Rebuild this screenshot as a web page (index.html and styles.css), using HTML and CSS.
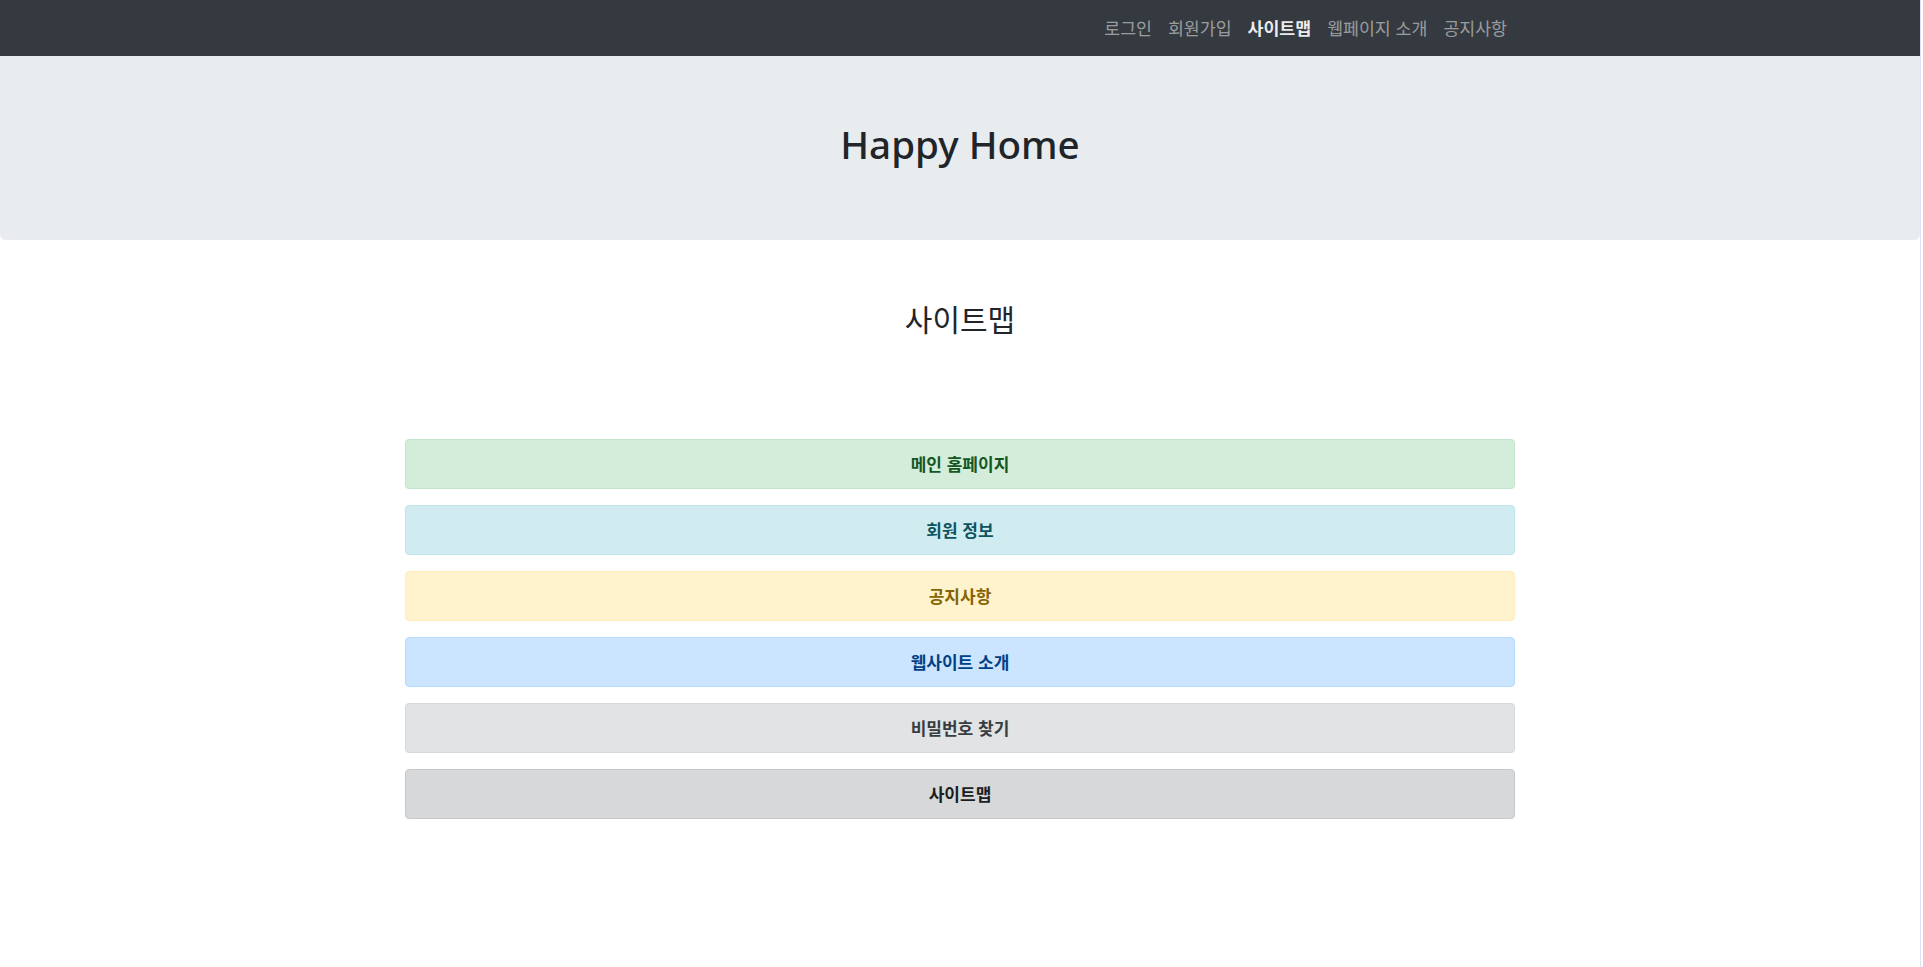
FILE: index.html
```html
<!DOCTYPE html>
<html lang="ko">
<head>
<meta charset="utf-8">
<title>사이트맵</title>
<link rel="stylesheet" href="styles.css">
</head>
<body>
<nav class="navbar">
  <div class="container nav-inner">
    <ul class="nav-list">
      <li><a class="nav-link" href="#">로그인</a></li>
      <li><a class="nav-link" href="#">회원가입</a></li>
      <li><a class="nav-link active" href="#">사이트맵</a></li>
      <li><a class="nav-link" href="#">웹페이지 소개</a></li>
      <li><a class="nav-link" href="#">공지사항</a></li>
    </ul>
  </div>
</nav>
<header class="jumbotron">
  <h1 class="title">Happy Home</h1>
</header>
<main class="container">
  <h3 class="page-title">사이트맵</h3>
  <div class="alerts">
    <div class="alert alert-success"><a href="#">메인 홈페이지</a></div>
    <div class="alert alert-info"><a href="#">회원 정보</a></div>
    <div class="alert alert-warning"><a href="#">공지사항</a></div>
    <div class="alert alert-primary"><a href="#">웹사이트 소개</a></div>
    <div class="alert alert-secondary"><a href="#">비밀번호 찾기</a></div>
    <div class="alert alert-dark"><a href="#">사이트맵</a></div>
  </div>
</main>
</body>
</html>
```

FILE: styles.css
```css
html {
  background: #ffffff;
}
body {
  margin: 0;
  width: 1920px;
  min-height: 967px;
  box-shadow: 1px 0 0 #dfe2f2;
  font-family: "Segoe UI", "Noto Sans", "Noto Sans CJK KR", sans-serif;
  font-size: 16px;
  line-height: 1.5;
  color: #212529;
  background: #ffffff;
}
.container {
  width: 1140px;
  padding: 0 15px;
  margin: 0 auto;
  box-sizing: border-box;
}
.navbar {
  background: #343a40;
  height: 56px;
  display: flex;
  align-items: center;
}
.nav-inner {
  display: flex;
  justify-content: flex-end;
}
.nav-list {
  list-style: none;
  margin: 0;
  padding: 0;
  display: flex;
}
.nav-link {
  display: block;
  padding: 8px 8px;
  color: rgba(255, 255, 255, 0.5);
  text-decoration: none;
  font-family: "Noto Sans CJK KR", sans-serif;
  font-size: 17.3px;
  line-height: 24px;
}
.nav-link.active {
  color: rgba(255, 255, 255, 0.92);
  font-weight: 700;
}
.jumbotron {
  background: #e9ecef;
  padding: 64px 32px;
  margin-bottom: 32px;
  border-radius: 0 0 5px 5px;
  text-align: center;
}
.title {
  margin: 0 0 8px;
  font-family: "Noto Sans", "Noto Sans CJK KR", sans-serif;
  font-size: 38.6px;
  font-weight: 500;
  line-height: 48px;
  color: #212529;
}
.page-title {
  margin: 60px 0 0;
  text-align: center;
  font-family: "Noto Sans CJK KR", sans-serif;
  font-size: 30px;
  font-weight: 400;
  line-height: 36px;
  color: #212529;
}
.alerts {
  margin-top: 103px;
  display: flex;
  flex-direction: column;
  gap: 16px;
}
.alert {
  padding: 12px 20px;
  border: 1px solid transparent;
  border-radius: 4px;
  text-align: center;
  font-family: "Noto Sans CJK KR", sans-serif;
  font-size: 17px;
  line-height: 24px;
}
.alert a {
  font-weight: 700;
  text-decoration: none;
  color: inherit;
}
.alert-success { background: #d4edda; border-color: #c3e6cb; color: #155724; }
.alert-info { background: #d1ecf1; border-color: #bee5eb; color: #0c5460; }
.alert-warning { background: #fff3cd; border-color: #ffeeba; color: #856404; }
.alert-primary { background: #cce5ff; border-color: #b8daff; color: #004085; }
.alert-secondary { background: #e2e3e5; border-color: #d6d8db; color: #383d41; }
.alert-dark { background: #d6d8d9; border-color: #c6c8ca; color: #1b1e21; }
```
